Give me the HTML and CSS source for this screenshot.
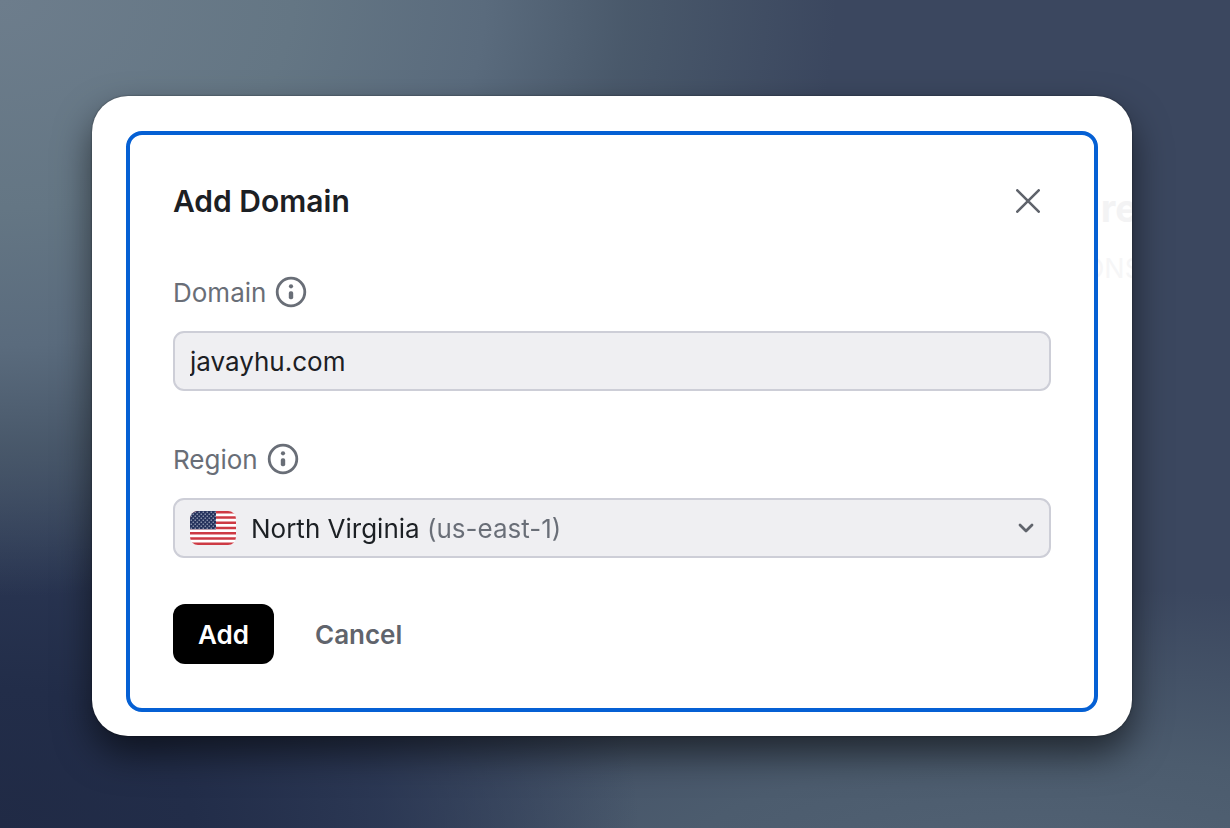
FILE: index.html
```html
<!DOCTYPE html>
<html lang="en">
<head>
  <meta charset="UTF-8">
  <meta name="viewport" content="width=device-width, initial-scale=1.0">
  <title>Add Domain</title>
  <link rel="stylesheet" href="styles.css">
</head>
<body>
  <main class="window">
    <div class="backdrop" aria-hidden="true">
      <div class="backdrop-title">re</div>
      <div class="backdrop-heading">ONS</div>
    </div>

    <form class="dialog" role="dialog" aria-labelledby="dialog-title">
      <header class="dialog-header">
        <h1 id="dialog-title">Add Domain</h1>
        <button class="close-button" type="button" aria-label="Close">
          <svg width="24" height="24" viewBox="0 0 24 24" fill="none" stroke="currentColor" stroke-width="2.6" stroke-linecap="round">
            <path d="M1.3 1.3l21.4 21.4M22.7 1.3L1.3 22.7"/>
          </svg>
        </button>
      </header>

      <div class="fields">
        <div class="field">
          <div class="field-label">
            <label for="domain">Domain</label>
            <svg class="info-icon" viewBox="0 0 32 32">
              <circle cx="16" cy="16" r="13.8" fill="none" stroke="currentColor" stroke-width="2.8"/>
              <circle cx="16" cy="10.3" r="2.1" fill="currentColor"/>
              <rect x="13.8" y="15.2" width="4.4" height="8" rx="1.8" fill="currentColor"/>
            </svg>
          </div>
          <input class="control" id="domain" type="text" value="javayhu.com">
        </div>

        <div class="field">
          <div class="field-label">
            <label for="region">Region</label>
            <svg class="info-icon" viewBox="0 0 32 32">
              <circle cx="16" cy="16" r="13.8" fill="none" stroke="currentColor" stroke-width="2.8"/>
              <circle cx="16" cy="10.3" r="2.1" fill="currentColor"/>
              <rect x="13.8" y="15.2" width="4.4" height="8" rx="1.8" fill="currentColor"/>
            </svg>
          </div>
          <div class="control select-control">
            <svg class="flag" viewBox="0 0 46 34">
              <defs>
                <pattern id="stars" width="4" height="4" patternUnits="userSpaceOnUse">
                  <circle cx="1.2" cy="1.2" r="0.65" fill="#c9cfdf"/>
                  <circle cx="3.2" cy="3.2" r="0.65" fill="#c9cfdf"/>
                </pattern>
              </defs>
              <rect width="46" height="34" fill="#fff"/>
              <path d="M0 1.3h46M0 6.5h46M0 11.8h46M0 17h46M0 22.2h46M0 27.5h46M0 32.7h46" stroke="#cd3a44" stroke-width="2.6"/>
              <rect width="26" height="18.3" fill="#26335d"/>
              <rect width="26" height="18.3" fill="url(#stars)"/>
            </svg>
            <select id="region">
              <option>North Virginia (us-east-1)</option>
            </select>
            <svg class="chevron" viewBox="0 0 16 10" fill="none" stroke="currentColor" stroke-width="2.8" stroke-linecap="round" stroke-linejoin="round">
              <path d="M2 2l6 6 6-6"/>
            </svg>
          </div>
        </div>
      </div>

      <div class="actions">
        <button class="button button-primary" type="submit">Add</button>
        <button class="button button-ghost" type="button">Cancel</button>
      </div>
    </form>
  </main>
</body>
</html>
```

FILE: styles.css
```css
* {
  margin: 0;
  padding: 0;
  box-sizing: border-box;
}

body {
  min-height: 100vh;
  padding: 96px 98px 92px 92px;
  font-family: Inter, 'Liberation Sans', sans-serif;
  font-size: 26px;
  color: #1c2024;
  background:
    radial-gradient(ellipse 68% 72% at 0% 0%, #6d7d8c 0%, #647684 35%, #5a6b7d 58%, rgba(76, 92, 109, 0.85) 75%, rgba(60, 74, 96, 0) 100%),
    radial-gradient(ellipse 52% 56% at 0% 100%, #202a45 0%, #222d49 30%, rgba(36, 48, 78, 0.75) 60%, rgba(56, 68, 94, 0) 100%),
    radial-gradient(ellipse 75% 34% at 85% 105%, #526274 0%, #4c5c6e 40%, rgba(60, 72, 95, 0) 100%),
    #3b475f;
}

.window {
  position: relative;
  padding: 35px 34px 24px;
  overflow: hidden;
  background: #fff;
  border-radius: 36px;
  box-shadow: 0 0 2px rgba(0, 0, 0, 0.5), 0 18px 36px rgba(0, 0, 0, 0.55);
}

/* page content showing faintly behind the dialog */
.backdrop {
  position: absolute;
  top: 89px;
  right: -10px;
  text-align: right;
}

.backdrop-title {
  margin-right: 4px;
  font-size: 38px;
  font-weight: 700;
  line-height: 46px;
  color: #f3f3f4;
}

.backdrop-heading {
  margin-top: 22px;
  font-size: 27px;
  line-height: 32px;
  color: #f6f6f7;
}

.dialog {
  position: relative;
  padding: 44px 43px;
  background: #fff;
  border: 4px solid #0560d4;
  border-radius: 16px;
}

.dialog-header {
  display: flex;
  align-items: center;
  justify-content: space-between;
  height: 44px;
  margin-bottom: 53px;
}

h1 {
  font-size: 30px;
  font-weight: 600;
  line-height: 42px;
}

button {
  font: inherit;
  border: none;
  background: none;
  cursor: pointer;
}

.close-button {
  display: flex;
  padding: 11px;
  color: #60646c;
}

.fields {
  display: grid;
  gap: 52px;
}

.field-label {
  display: flex;
  align-items: center;
  gap: 9px;
  height: 32px;
  margin-bottom: 23px;
  color: #696e77;
}

.info-icon {
  width: 32px;
  height: 32px;
}

.control {
  display: flex;
  align-items: center;
  width: 100%;
  height: 60px;
  padding: 0 15px;
  font: inherit;
  color: inherit;
  background: #efeff2;
  border: 2px solid #cdced7;
  border-radius: 11px;
}

.flag {
  width: 46px;
  height: 34px;
  margin-right: 15px;
  border-radius: 8px;
}

/* the region code is drawn lighter than its name */
.select-control select {
  flex: 1;
  height: 56px;
  font: inherit;
  color: transparent;
  background: linear-gradient(90deg, #1c2024 172px, #696e77 172px);
  background-clip: text;
  border: none;
  appearance: none;
}

.select-control option {
  color: #1c2024;
}

.chevron {
  width: 16px;
  height: 10px;
  color: #60646c;
}

.actions {
  display: flex;
  gap: 16px;
  margin-top: 46px;
}

.button {
  height: 60px;
  padding: 0 25px;
  font-weight: 600;
  border-radius: 12px;
}

.button-primary {
  color: #fff;
  background: #000;
}

.button-ghost {
  color: #60646c;
}
```
